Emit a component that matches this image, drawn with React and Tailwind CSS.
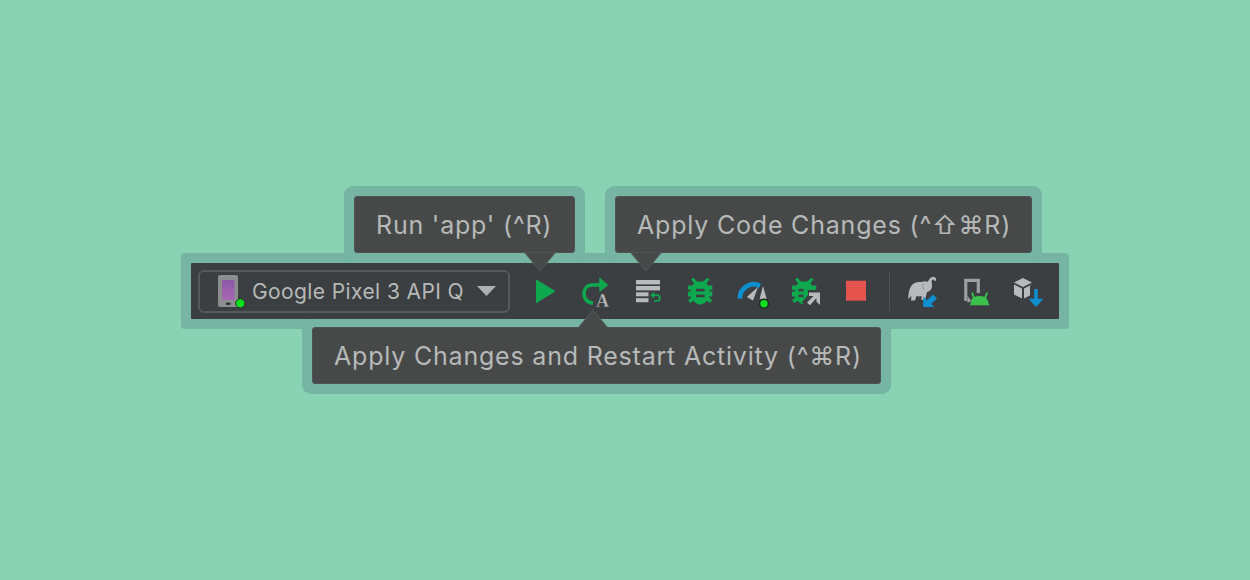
import React from 'react';

const GREEN = '#0FA84E';
const GREY = '#B8BABC';
const BLUE = '#0E8FD0';
const DARK = '#3B3F41';

const Arrow = ({ className, up = false }) => (
  <svg className={`absolute ${className}`} width="32" height="20" viewBox="0 0 32 20">
    {up ? (
      <path d="M1 19 L16 1 L31 19" fill="#474949" stroke="#55585A" strokeWidth="1" />
    ) : (
      <path d="M1 1 L16 19 L31 1" fill="#474949" stroke="#55585A" strokeWidth="1" />
    )}
  </svg>
);

const Tip = ({ className, children, arrow }) => (
  <div className={`relative z-10 flex items-center rounded-[3px] border border-[#505355] bg-[#474949] pl-[21px] pt-[2px] text-[25px] leading-none tracking-[0.8px] text-[#B7B9B9] whitespace-nowrap ${className}`}>
    {children}
    {arrow}
  </div>
);

const Icon = ({ children }) => (
  <svg width="32" height="32" viewBox="0 0 32 32" className="shrink-0 overflow-visible">
    {children}
  </svg>
);

const Bug = ({ stripes = true }) => (
  <g>
    <path d="M9 2.6 L13 6.4 H19.4 L23.4 2.6 L25.4 4.8 L22.4 8 L24 10.5 H28.3 V14.8 H25.6 V16.4 H28.3 V21.4 H25.6 L25.4 23 L28.3 25 L26.2 28 L23 25.8 C21 28 18.5 29.7 16.2 29.7 C14 29.7 11.4 28 9.4 25.8 L6.2 28 L4 25 L7 23 L6.8 21.4 H4 V16.4 H6.8 V14.8 H4 V10.5 H8.4 L10 8 L7 4.8 Z" fill={GREEN} />
    {stripes && (
      <g fill={DARK}>
        <rect x="12" y="13.8" width="8.6" height="2.6" />
        <rect x="12" y="19.6" width="8.6" height="2.6" />
      </g>
    )}
  </g>
);

const App = () => (
  <div className="h-[580px] w-[1250px] overflow-hidden bg-[#89D3B4] pt-[196px] font-['Inter','DejaVu_Sans',sans-serif]">
    <div className="ml-[354px] flex h-[57px] gap-10">
      <Tip className="w-[221px] shadow-[0_0_0_10px_#75B5A2]" arrow={<Arrow className="left-[169px] top-[55px]" />}>Run 'app' (^R)</Tip>
      <Tip className="w-[417px] shadow-[0_0_0_10px_#75B5A2]" arrow={<Arrow className="left-[14px] top-[55px]" />}>Apply Code Changes (^⇧⌘R)</Tip>
    </div>

    <div className="relative mt-[10px] ml-[191px] flex h-[56px] w-[868px] items-center rounded-[1px] bg-[#3B3F41] pl-[7px] shadow-[0_0_0_10px_#75B5A2]">
      <div className="flex h-[43px] w-[312px] items-center rounded-[6px] border-2 border-[#55595B] pl-[14px]">
        <svg width="32" height="32" viewBox="0 0 32 32" className="shrink-0 overflow-visible">
          <defs>
            <linearGradient id="screen" x1="0" y1="0" x2="0" y2="1">
              <stop offset="0" stopColor="#8C5AA4" />
              <stop offset="1" stopColor="#A866B4" />
            </linearGradient>
          </defs>
          <rect x="4" y="0" width="20" height="32" rx="2" fill="#8B8D8F" />
          <rect x="8" y="5" width="12.5" height="20" fill="url(#screen)" />
          <rect x="12" y="27.6" width="4.5" height="2.2" fill="#2B2D2E" />
          <circle cx="26.3" cy="28.3" r="4.6" fill="#0FE01E" stroke="#1E3A22" strokeWidth="1" />
        </svg>
        <span className="ml-[6px] text-[21px] leading-none tracking-[0.4px] text-[#B7B9B9] whitespace-nowrap">Google Pixel 3 API Q</span>
        <svg width="19" height="10" viewBox="0 0 19 10" className="ml-[13px] shrink-0">
          <path d="M0 0 H19 L9.5 10 Z" fill="#AEB0B2" />
        </svg>
      </div>

      <div className="ml-[18px] flex items-center gap-5">
        <Icon>
          <path d="M8 4.3 L27.7 16.3 L8 28.3 Z" fill={GREEN} />
        </Icon>
        <Icon>
          <path d="M20 10 H12 C7 10 4 14 4 19 C4 24 8 28 13 28" fill="none" stroke={GREEN} strokeWidth="3.6" />
          <path d="M19.3 2.3 L28.3 10 L19.3 17.3 Z" fill={GREEN} />
          <text x="22.5" y="32" textAnchor="middle" fontFamily="'Liberation Serif', serif" fontWeight="700" fontSize="18" fill={GREY} stroke={DARK} strokeWidth="0.3">A</text>
        </Icon>
        <Icon>
          <g fill={GREY}>
            <rect x="4" y="5" width="24" height="4.4" />
            <rect x="4" y="11" width="24" height="4.4" />
            <rect x="4" y="17.3" width="12.5" height="4" />
            <rect x="4" y="23.2" width="12.5" height="4" />
          </g>
          <path d="M21.5 20.2 H25 C26.8 20.2 27.8 21.4 27.8 23 C27.8 24.7 26.6 26 25 26 H22" fill="none" stroke={GREEN} strokeWidth="1.7" />
          <path d="M18.2 20.2 L22.2 17 V23.4 Z" fill={GREEN} />
        </Icon>
        <Icon>
          <Bug />
        </Icon>
        <Icon>
          <path d="M4 23.7 A13.8 13.8 0 0 1 24 10.8" fill="none" stroke={BLUE} strokeWidth="4.8" />
          <path d="M10.8 22 L22 12 L17 25.5 Z" fill={GREY} />
          <path d="M27 11 L30.7 24 H23.6 Z" fill={GREY} />
          <circle cx="28" cy="28.7" r="4.4" fill="#0FE01E" stroke="#16301A" strokeWidth="1.4" />
        </Icon>
        <Icon>
          <Bug stripes={false} />
          <rect x="10.5" y="13.8" width="5" height="2.6" fill={DARK} />
          <rect x="10.5" y="19.6" width="5" height="2.6" fill={DARK} />
          <path d="M16 30 L14 27 L20 20 V15 H35 V32 H16 Z" fill={DARK} />
          <path d="M21 17.5 H32 V30 L28.4 26.5 V23 L22 30.3 L19 27.5 L25.6 21 H21 Z" fill={GREY} />
        </Icon>
        <Icon>
          <rect x="6" y="5.7" width="20" height="20" fill="#E5534F" />
        </Icon>
      </div>

      <div className="ml-[17px] h-[40px] w-px bg-[#4E5254]" />

      <div className="ml-[18px] flex items-center gap-5">
        <Icon>
          <path d="M0.3 24 C0.3 16 2.5 8.5 8 7.5 C11 6.5 13 7.5 15.5 6.5 C17 6 19 7 20 6.5 C21 4 23 1.8 25 1.8 C27 1.8 28.3 3 28.3 5.5 L26.3 6 C26.3 4.5 25 4 24 5 C23 6 24.3 9 24 12 C23.7 15 21 16.5 19 17 L17 25 H13.5 V21 C11.5 21.5 10 21.5 8.5 21 L7 25.5 H3 L3.5 21 Z" fill={GREY} />
          <path d="M15.5 8.5 C14 10.5 14.5 13 16.5 14.5" fill="none" stroke="#8D8F91" strokeWidth="1" />
          <path d="M15.3 32 V21.5 L19 25.2 L25 19.5 L29 23.5 L23 29 L26.5 32 Z" fill={BLUE} />
        </Icon>
        <Icon>
          <path d="M5.8 26 V5.4 H18.3 V18" fill="none" stroke="#9C9EA0" strokeWidth="3.2" />
          <path d="M7.5 27.7 V21 L11.5 26 Z" fill="#9C9EA0" />
          <path d="M10 30.3 L11.5 25 C12.5 22.5 15 21 19.5 21 C24 21 26.5 22.5 27.5 25 L29.3 30.3 Z" fill="#3CC24A" />
          <path d="M14 23 L12 17.6 M25 23 L27.2 17.6" stroke="#3CC24A" strokeWidth="1.9" />
        </Icon>
        <Icon>
          <path d="M11 3 L20 7.6 L11 12 L2 7.6 Z" fill={GREY} />
          <path d="M2 9.6 L10 13.6 V23.6 L2 19.4 Z" fill={GREY} />
          <path d="M20 9.6 L12 13.6 V23.6 L18 20.4 V11 Z" fill={GREY} />
          <rect x="22.2" y="14" width="3.6" height="11" fill={BLUE} />
          <path d="M16.6 23.7 H31.4 L24 32 Z" fill={BLUE} />
        </Icon>
      </div>
    </div>

    <Tip className="mt-2 ml-[312px] h-[57px] w-[569px] shadow-[1px_1px_0_9px_#75B5A2,-1px_1px_0_9px_#75B5A2]" arrow={<Arrow up className="left-[264px] top-[-19px]" />}>
      Apply Changes and Restart Activity (^⌘R)
    </Tip>
  </div>
);

export default App;
